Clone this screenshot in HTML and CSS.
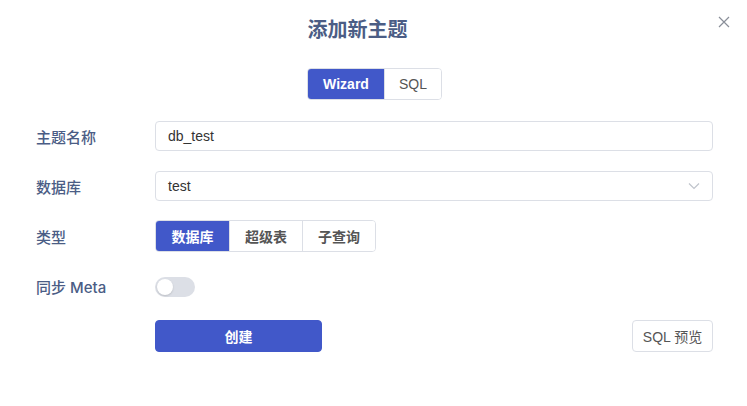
FILE: index.html
```html
<!DOCTYPE html>
<html lang="zh">
<head>
<meta charset="utf-8">
<link rel="stylesheet" href="styles.css">
</head>
<body>
<div class="dialog">
  <div class="header">
    <h1 class="title">添加新主题</h1>
    <button class="close" aria-label="close">
      <svg width="12" height="12" viewBox="0 0 12 12"><path d="M1 1L11 11M11 1L1 11" stroke="#8a8f99" stroke-width="1.2" fill="none"/></svg>
    </button>
  </div>
  <div class="mode">
    <div class="seg seg-mode">
      <span class="seg-item active">Wizard</span>
      <span class="seg-item">SQL</span>
    </div>
  </div>
  <div class="form">
    <div class="row">
      <label class="label">主题名称</label>
      <div class="input">db_test</div>
    </div>
    <div class="row">
      <label class="label">数据库</label>
      <div class="input select">
        <span>test</span>
        <svg width="12" height="8" viewBox="0 0 12 8"><path d="M1 1.5L6 6.5L11 1.5" stroke="#c0c4cc" stroke-width="1.2" fill="none"/></svg>
      </div>
    </div>
    <div class="row">
      <label class="label">类型</label>
      <div class="seg seg-type">
        <span class="seg-item active">数据库</span>
        <span class="seg-item">超级表</span>
        <span class="seg-item">子查询</span>
      </div>
    </div>
    <div class="row">
      <label class="label">同步 Meta</label>
      <div class="switch"><span class="knob"></span></div>
    </div>
    <div class="row actions">
      <span class="label"></span>
      <button class="btn primary">创建</button>
      <span class="spacer"></span>
      <button class="btn plain">SQL 预览</button>
    </div>
  </div>
</div>
</body>
</html>
```
FILE: styles.css
```css
* { box-sizing: border-box; }
html, body { margin: 0; padding: 0; background: #fff; }
body {
  font-family: "Liberation Sans", "Noto Sans CJK SC", sans-serif;
  color: #333;
}
.dialog {
  width: 747px;
  height: 406px;
  padding: 0 34px 0 36px;
  display: flex;
  flex-direction: column;
}
.header {
  position: relative;
  height: 60px;
  display: flex;
  align-items: center;
  justify-content: center;
}
.title {
  margin: 0 34px 4px 0;
  font-size: 20px;
  font-weight: 700;
  color: #4b5d85;
}
.close {
  position: absolute;
  right: -17px;
  top: 16px;
  border: 0;
  background: none;
  padding: 0;
  width: 12px;
  height: 12px;
  display: flex;
}
.mode {
  display: flex;
  justify-content: center;
  margin-top: 8px;
}
.seg {
  display: flex;
  border: 1px solid #dcdfe6;
  border-radius: 4px;
  overflow: hidden;
}
.seg-item {
  display: flex;
  align-items: center;
  justify-content: center;
  font-size: 14px;
  font-weight: 700;
  color: #555;
  background: #fff;
}
.seg-item + .seg-item { border-left: 1px solid #dcdfe6; }
.seg-item.active {
  background: #4158c9;
  color: #fff;
  border-color: #4158c9;
}
.seg-mode { height: 32px; }
.seg-mode .seg-item:first-child { width: 76px; }
.seg-mode .seg-item:last-child { width: 57px; font-weight: 500; }
.form {
  margin-top: 21px;
  display: flex;
  flex-direction: column;
  gap: 20px;
}
.row {
  display: flex;
  align-items: center;
  height: 30px;
}
.label {
  width: 119px;
  flex: none;
  font-family: "Inter", "Noto Sans CJK SC", sans-serif;
  font-size: 15px;
  font-weight: 500;
  color: #4b5d85;
}
.input {
  flex: 1;
  height: 30px;
  border: 1px solid #dcdfe6;
  border-radius: 4px;
  padding: 0 12px;
  display: flex;
  align-items: center;
  font-size: 14px;
  color: #333;
}
.select { justify-content: space-between; padding-right: 12px; }
.seg-type { height: 32px; }
.seg-type .seg-item { width: 73px; }
.switch {
  width: 40px;
  height: 20px;
  border-radius: 10px;
  background: #dcdfe6;
  position: relative;
  margin-top: 1px;
}
.knob {
  position: absolute;
  left: 2px;
  top: 2px;
  width: 16px;
  height: 16px;
  border-radius: 50%;
  background: #fff;
  box-shadow: 0 1px 2px rgba(0,0,0,0.15);
}
.actions { height: 32px; margin-top: -1px; }
.spacer { flex: 1; }
.btn {
  height: 32px;
  border-radius: 4px;
  font-family: inherit;
  font-size: 14px;
  padding: 0;
}
.primary {
  width: 167px;
  background: #4158c9;
  border: 1px solid #4158c9;
  color: #fff;
  font-weight: 700;
}
.plain {
  width: 81px;
  background: #fff;
  border: 1px solid #dcdfe6;
  color: #555;
}
```
